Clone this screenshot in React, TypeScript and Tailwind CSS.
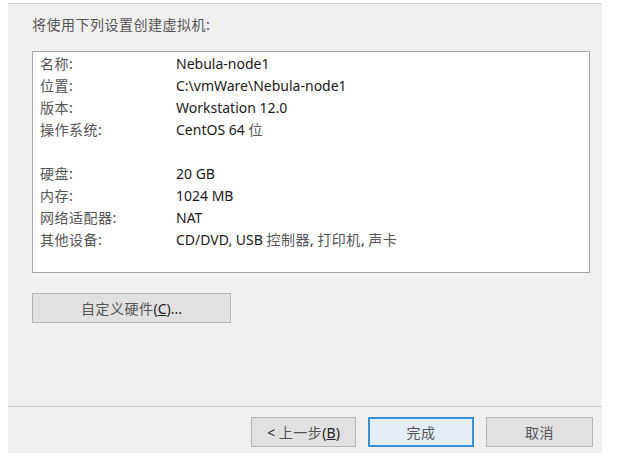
const latin = "font-['Noto_Sans','Noto_Sans_CJK_SC',sans-serif]";
const cjk = "font-['Noto_Sans_CJK_SC',sans-serif] text-[#555] tracking-[0.5px]";

const rows: ([string, React.ReactNode] | null)[] = [
  ["名称:", "Nebula-node1"],
  ["位置:", "C:\\vmWare\\Nebula-node1"],
  ["版本:", "Workstation 12.0"],
  [
    "操作系统:",
    <>
      CentOS 64 <span className={cjk}>位</span>
    </>,
  ],
  null,
  ["硬盘:", "20 GB"],
  ["内存:", "1024 MB"],
  ["网络适配器:", "NAT"],
  [
    "其他设备:",
    <>
      CD/DVD, USB <span className={cjk}>控制器</span>, <span className={cjk}>打印机</span>,{" "}
      <span className={cjk}>声卡</span>
    </>,
  ],
];

const SummaryRow = ({ label, value }: { label: string; value: React.ReactNode }) => (
  <div className="flex h-[22px] items-center">
    <span className={`w-[136px] shrink-0 text-[14px] ${cjk}`}>{label}</span>
    <span className={`text-[14px] text-[#1a1a1a] ${latin}`}>{value}</span>
  </div>
);

const DialogButton = ({
  children,
  primary,
  className = "",
}: {
  children: React.ReactNode;
  primary?: boolean;
  className?: string;
}) => (
  <div
    className={`flex h-[30px] items-center justify-center text-[14px] ${
      primary ? "border-2 border-[#3c8fd8] bg-[#e5eef6]" : "border border-[#b4b4b4] bg-[#e1e1e1]"
    } ${className}`}
  >
    {children}
  </div>
);

export default function App() {
  return (
    <div className="h-[462px] w-[635px] bg-white">
      <div className="ml-[8px] mt-[3px] flex h-[450px] w-[594px] flex-col border-t border-[#d4d4d4] bg-[#f0f0f0]">
        <div className="px-[24px] pt-[10px]">
          <div className={`h-[20px] text-[14px] leading-[20px] ${cjk} text-[#3a3a3a]`}>
            将使用下列设置创建虚拟机:
          </div>

          <div className="mt-[17px] h-[222px] w-[558px] border border-[#a8a8a8] bg-white pl-[7px]">
            {rows.map((r, i) =>
              r ? <SummaryRow key={i} label={r[0]} value={r[1]} /> : <div key={i} className="h-[22px]" />
            )}
          </div>

          <DialogButton className="mt-[20px] w-[199px]">
            <span className={cjk}>自定义硬件</span>
            <span className={`${latin} text-[#222]`}>
              (<span className="underline">C</span>)...
            </span>
          </DialogButton>
        </div>

        <div className="flex-1" />

        <div className="h-px bg-[#c9c9c9]" />
        <div className="flex h-[46px] items-start justify-end gap-[12px] pr-[9px] pt-[10px]">
          <DialogButton className="w-[105px]">
            <span className={`${latin} text-[#222]`}>&lt;&nbsp;</span>
            <span className={cjk}>上一步</span>
            <span className={`${latin} text-[#222]`}>
              (<span className="underline">B</span>)
            </span>
          </DialogButton>
          <DialogButton primary className="w-[106px]">
            <span className={cjk}>完成</span>
          </DialogButton>
          <DialogButton className="w-[107px]">
            <span className={cjk}>取消</span>
          </DialogButton>
        </div>
      </div>
    </div>
  );
}
